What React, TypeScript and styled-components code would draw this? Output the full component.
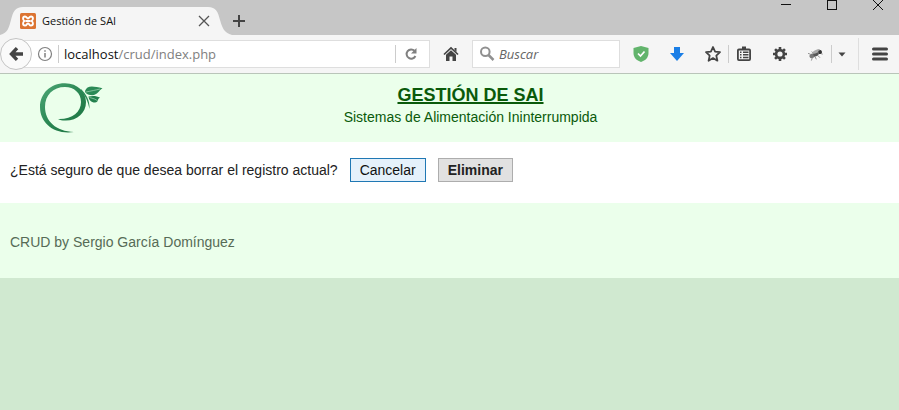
import React from "react";
import styled, { createGlobalStyle } from "styled-components";

const GlobalStyle = createGlobalStyle`
  *, *::before, *::after { box-sizing: border-box; }
  body {
    margin: 0;
    background: #d0e9d0;
    font-family: "Liberation Sans", Arial, sans-serif;
    font-size: 14px;
    line-height: 20px;
  }
`;

const chromeFont = `"Open Sans", "Noto Sans", sans-serif`;

const PlainButton = styled.button`
  display: flex;
  align-items: center;
  justify-content: center;
  flex: none;
  padding: 0;
  border: 0;
  background: transparent;
  color: #4a4a4a;
  font: inherit;
`;

const TitleBar = styled.div`
  display: flex;
  height: 35px;
  background: #c6c6c6;
  font-family: ${chromeFont};
`;

const Tab = styled.div`
  position: relative;
  display: flex;
  align-items: center;
  width: 232px;
  height: 28px;
  margin-top: 7px;
  padding: 0 20px;
  gap: 6px;
`;

const TabShape = styled.svg`
  position: absolute;
  inset: 0;
`;

const Favicon = styled.svg`
  position: relative;
  flex: none;
`;

const TabTitle = styled.span`
  position: relative;
  flex: 1;
  font-size: 11px;
  line-height: 16px;
  color: #111;
`;

const TabClose = styled(PlainButton)`
  position: relative;
  width: 16px;
  height: 16px;
`;

const NewTab = styled(PlainButton)`
  width: 14px;
  margin-top: 7px;
`;

const WindowControls = styled.div`
  display: flex;
  gap: 4px;
  margin-left: auto;
`;

const WindowButton = styled(PlainButton)`
  width: 42px;
  height: 10px;
`;

const Toolbar = styled.div`
  display: flex;
  align-items: center;
  gap: 6px;
  height: 39px;
  padding-right: 4px;
  background: #f5f5f5;
  border-bottom: 1px solid #b9c5b9;
  font-family: ${chromeFont};
`;

const BackButton = styled(PlainButton)`
  z-index: 1;
  width: 32px;
  height: 32px;
  margin-right: -22px;
  border: 1px solid #c4c4c4;
  border-radius: 50%;
  background: #fafafa;
`;

const Field = styled.div`
  display: flex;
  align-items: center;
  height: 28px;
  border: 1px solid #dedede;
  background: #fff;
`;

const AddressField = styled(Field)`
  flex: 1;
  min-width: 0;
  padding: 0 3px 0 20px;
`;

const InfoIcon = styled.svg`
  flex: none;
  margin-right: 5px;
`;

const SearchField = styled(Field)`
  flex: none;
  width: 148px;
  padding: 0 6px;
  gap: 4px;
`;

const SearchInput = styled.input`
  flex: 1;
  min-width: 0;
  padding: 0;
  border: 0;
  outline: 0;
  background: transparent;
  font: italic 13px/20px ${chromeFont};
  color: #333;
  &::placeholder { color: #666; opacity: 1; }
`;

const Url = styled.span`
  flex: 1;
  padding-left: 5px;
  font-size: 13px;
  color: #111;
  white-space: nowrap;
  overflow: hidden;
`;

const UrlPath = styled.span`
  color: #808080;
`;

const ToolButton = styled(PlainButton)<{ $narrow?: boolean }>`
  width: ${(p) => (p.$narrow ? 20 : 30)}px;
  height: 28px;
`;

const Divider = styled.span<{ $tall?: boolean }>`
  flex: none;
  width: 1px;
  height: ${(p) => (p.$tall ? 32 : 18)}px;
  background: ${(p) => (p.$tall ? "#dedede" : "#cccccc")};
`;

const Group = styled.div`
  display: flex;
  align-items: center;
  flex: none;
`;

const SiteHeader = styled.header`
  display: flex;
  padding: 8px 61px 8px 40px;
  background: #ebffeb;
  color: #0a5a0a;
`;

const Logo = styled.svg`
  flex: none;
`;

const Headings = styled.div`
  flex: 1;
  padding-top: 2px;
  text-align: center;
`;

const Title = styled.h1`
  margin: 0 0 1px;
  font-size: 18px;
  line-height: 22px;
  text-decoration: underline;
  text-decoration-thickness: 2px;
`;

const Subtitle = styled.p`
  margin: 0;
`;

const Main = styled.main`
  display: flex;
  flex-wrap: wrap;
  align-items: center;
  gap: 12px;
  padding: 16px 10px 21px;
  background: #fff;
  color: #222;
`;

const Question = styled.p`
  margin: 0;
`;

const ActionButton = styled.button<{ $primary?: boolean }>`
  height: 24px;
  padding: 0 9px;
  border: 1px solid ${(p) => (p.$primary ? "#2078b4" : "#adadad")};
  background: ${(p) => (p.$primary ? "#e5f1fb" : "#e1e1e1")};
  color: ${(p) => (p.$primary ? "#111" : "#222")};
  font-family: inherit;
  font-size: 14px;
  line-height: 20px;
  font-weight: ${(p) => (p.$primary ? 400 : 700)};
`;

const Footer = styled.footer`
  padding: 29px 10px 26px;
  background: #ebffeb;
  color: #566b56;
`;

export default function App() {
  return (
    <>
      <GlobalStyle />
      <TitleBar>
        <Tab>
          <TabShape width="232" height="28" viewBox="0 0 232 28" aria-hidden="true">
            <path d="M0 28C8 26 9 20 11 13C13 5 15 0 23 0H208C216 0 218 5 220 13C222 20 224 26 232 28Z" fill="#f5f5f5" />
          </TabShape>
          <Favicon width="16" height="16" viewBox="0 0 16 16" aria-hidden="true">
            <rect width="16" height="16" rx="1.500" fill="#dc7432" />
            <path
              d="M4.500 8C2.500 7 2.500 3.500 5 3.500C7 3.500 6.500 5.500 8 5.500S9 3.500 11 3.500C13.500 3.500 13.500 7 11.500 8C13.500 9 13.500 12.500 11 12.500C9 12.500 9.500 10.500 8 10.500S7 12.500 5 12.500C2.500 12.500 2.500 9 4.500 8ZM5.500 8H10.500"
              fill="none"
              stroke="#fff"
              strokeWidth="1.900"
              strokeLinejoin="round"
            />
          </Favicon>
          <TabTitle>Gestión de SAI</TabTitle>
          <TabClose aria-label="Cerrar pestaña">
            <svg width="12" height="12" viewBox="0 0 12 12" stroke="#555" strokeWidth="1.300">
              <path d="M1 1L11 11M11 1L1 11" />
            </svg>
          </TabClose>
        </Tab>
        <NewTab aria-label="Nueva pestaña">
          <svg width="14" height="14" viewBox="0 0 14 14" stroke="#444" strokeWidth="2">
            <path d="M7 1V13M1 7H13" />
          </svg>
        </NewTab>
        <WindowControls>
          <WindowButton aria-label="Minimizar">
            <svg width="10" height="10" viewBox="0 0 10 10" stroke="#111">
              <path d="M0 4.500H10" />
            </svg>
          </WindowButton>
          <WindowButton aria-label="Maximizar">
            <svg width="10" height="10" viewBox="0 0 10 10" stroke="#111" fill="none">
              <rect x="0.500" y="0.500" width="9" height="9" />
            </svg>
          </WindowButton>
          <WindowButton aria-label="Cerrar">
            <svg width="10" height="10" viewBox="0 0 10 10" stroke="#111">
              <path d="M0 0L10 10M10 0L0 10" />
            </svg>
          </WindowButton>
        </WindowControls>
      </TitleBar>

      <Toolbar>
        <BackButton aria-label="Atrás">
          <svg width="14" height="14" viewBox="0 0 14 14" fill="none" stroke="#444" strokeWidth="3.400">
            <path d="M8 1.200L2.500 7L8 12.800M3 7H14" />
          </svg>
        </BackButton>
        <AddressField>
          <InfoIcon width="16" height="16" viewBox="0 0 16 16" fill="none" stroke="#808080" aria-hidden="true">
            <circle cx="8" cy="8" r="6.500" strokeWidth="1.200" />
            <path d="M8 7V11.500M8 4.200V5.800" strokeWidth="1.500" />
          </InfoIcon>
          <Divider />
          <Url>
            localhost<UrlPath>/crud/index.php</UrlPath>
          </Url>
          <Divider />
          <ToolButton aria-label="Recargar">
            <svg width="14" height="14" viewBox="0 0 14 14">
              <path d="M10.500 3.800A4.600 4.600 0 1 0 11.400 9" fill="none" stroke="#808080" strokeWidth="2" />
              <path d="M12.500 1V6.500H7Z" fill="#808080" />
            </svg>
          </ToolButton>
        </AddressField>
        <ToolButton aria-label="Inicio">
          <svg width="16" height="16" viewBox="0 0 16 16" fill="#444">
            <path d="M1 8.500L8 2L15 8.500" fill="none" stroke="#444" strokeWidth="1.700" />
            <path d="M11.500 2H13.500V6L11.500 4ZM3 8.700L8 4.300L13 8.700V15H9.500V10.500H6.500V15H3Z" />
          </svg>
        </ToolButton>
        <SearchField>
          <svg width="16" height="16" viewBox="0 0 16 16" fill="none" stroke="#909090">
            <circle cx="6.300" cy="5.800" r="4.300" strokeWidth="2" />
            <path d="M9.500 9L14.500 14" strokeWidth="2.500" />
          </svg>
          <SearchInput type="search" placeholder="Buscar" aria-label="Buscar" />
        </SearchField>
        <ToolButton aria-label="Protección">
          <svg width="16" height="16" viewBox="0 0 16 16">
            <path d="M8 0L15.500 2V7C15.500 11.500 12.500 14.500 8 16C3.500 14.500 0.500 11.500 0.500 7V2Z" fill="#62b46c" />
            <path d="M5 7.500L7.500 10L11.500 5.500" fill="none" stroke="#fff" strokeWidth="1.700" />
          </svg>
        </ToolButton>
        <ToolButton aria-label="Descargas">
          <svg width="16" height="16" viewBox="0 0 16 16">
            <path d="M5 1H11V7H15L8 15L1 7H5Z" fill="#1a7ee6" />
          </svg>
        </ToolButton>
        <Group>
          <ToolButton aria-label="Añadir a marcadores">
            <svg width="18" height="18" viewBox="0 0 18 18" fill="none" stroke="#444" strokeWidth="1.800" strokeLinejoin="round">
              <path d="M9 2L11.100 6.700L16 7.200L12.300 10.600L13.400 15.700L9 13.100L4.600 15.700L5.700 10.600L2 7.200L6.900 6.700Z" />
            </svg>
          </ToolButton>
          <Divider />
          <ToolButton aria-label="Ver marcadores">
            <svg width="16" height="16" viewBox="0 0 16 16" fill="none" stroke="#444">
              <rect x="1.900" y="3.500" width="12.200" height="10.600" rx="1" strokeWidth="1.800" />
              <path d="M6 2H10" strokeWidth="3" />
              <path d="M4 6.300H5.500M7 6.300H12.500M4 8.800H5.500M7 8.800H12.500M4 11.500H5.500M7 11.500H12.500" strokeWidth="1.400" />
            </svg>
          </ToolButton>
        </Group>
        <ToolButton aria-label="Ajustes">
          <svg width="16" height="16" viewBox="0 0 16 16" fill="none" stroke="#444">
            <circle cx="8" cy="8" r="3.900" strokeWidth="2.600" />
            <path
              d="M8 1V3.500M8 12.500V15M1 8H3.500M12.500 8H15M3.050 3.050L4.800 4.800M11.200 11.200L12.950 12.950M3.050 12.950L4.800 11.200M11.200 4.800L12.950 3.050"
              strokeWidth="2.600"
            />
          </svg>
        </ToolButton>
        <Group>
          <ToolButton aria-label="Depurador">
            <svg width="16" height="16" viewBox="0 0 16 16">
              <g transform="rotate(-25 8 8)">
                <path d="M3 6L1 4M6 6L5 4M9 10L10 13M6 10V13M3 10L1 12M12 9L14 11" stroke="#888" strokeWidth="0.800" />
                <ellipse cx="4" cy="8" rx="3" ry="2.200" fill="#777" />
                <ellipse cx="8" cy="8" rx="2.800" ry="2.200" fill="#555" />
                <ellipse cx="9.500" cy="5.800" rx="4" ry="1.500" fill="#aaa" />
                <circle cx="12.500" cy="8" r="1.900" fill="#333" />
              </g>
            </svg>
          </ToolButton>
          <Divider />
          <ToolButton $narrow aria-label="Más opciones">
            <svg width="8" height="5" viewBox="0 0 8 5" fill="#444">
              <path d="M0.500 0.500H7.500L4 4.500Z" />
            </svg>
          </ToolButton>
        </Group>
        <Divider $tall />
        <ToolButton aria-label="Menú">
          <svg width="16" height="14" viewBox="0 0 16 14" stroke="#444" strokeWidth="3" strokeLinecap="round">
            <path d="M1.500 2H14.500M1.500 7H14.500M1.500 12H14.500" />
          </svg>
        </ToolButton>
      </Toolbar>

      <SiteHeader>
        <Logo width="63" height="52" viewBox="0 0 63 52" role="img" aria-label="Logotipo">
          <defs>
            <linearGradient id="ring" x1="0" y1="0" x2="1" y2="1">
              <stop offset="0" stopColor="#4fa878" />
              <stop offset="0.500" stopColor="#2a8753" />
              <stop offset="1" stopColor="#1b703e" />
            </linearGradient>
          </defs>
          <path
            d="M34 50C14 53 0 41 0 25C0 11 11 1 25 1.200C38 1.400 46 10 46 20C46 31 37 39 25 38.600C22 38.500 20 38 18 37C32 37.500 41 30 41 20C41 11 34 5 25 5C13 5 5 13 5 25C5 39 16 49.500 34 50Z"
            fill="url(#ring)"
          />
          <path d="M41 7C46 12 50 18 49.500 27C48 19 45 13 41 9Z" fill="#2b8a56" />
          <path d="M45 9C47 3 53 4 62.500 6.300C58 9 58 14 50 13C47 12.500 45 11 45 9Z" fill="#2b8a56" />
          <path d="M48.500 14.500C53 13.500 57 14 60 15.500C57 17 59 20 55 20.500C51 20.500 49 18 48.500 14.500Z" fill="#23804d" />
          <path d="M46 10C51 9 56 8 60 7M49.500 15.500C53 16.500 56 17 58 19.500" fill="none" stroke="#a5d8b8" strokeWidth="0.700" />
        </Logo>
        <Headings>
          <Title>GESTIÓN DE SAI</Title>
          <Subtitle>Sistemas de Alimentación Ininterrumpida</Subtitle>
        </Headings>
      </SiteHeader>

      <Main>
        <Question>¿Está seguro de que desea borrar el registro actual?</Question>
        <ActionButton $primary>Cancelar</ActionButton>
        <ActionButton>Eliminar</ActionButton>
      </Main>

      <Footer>CRUD by Sergio García Domínguez</Footer>
    </>
  );
}
